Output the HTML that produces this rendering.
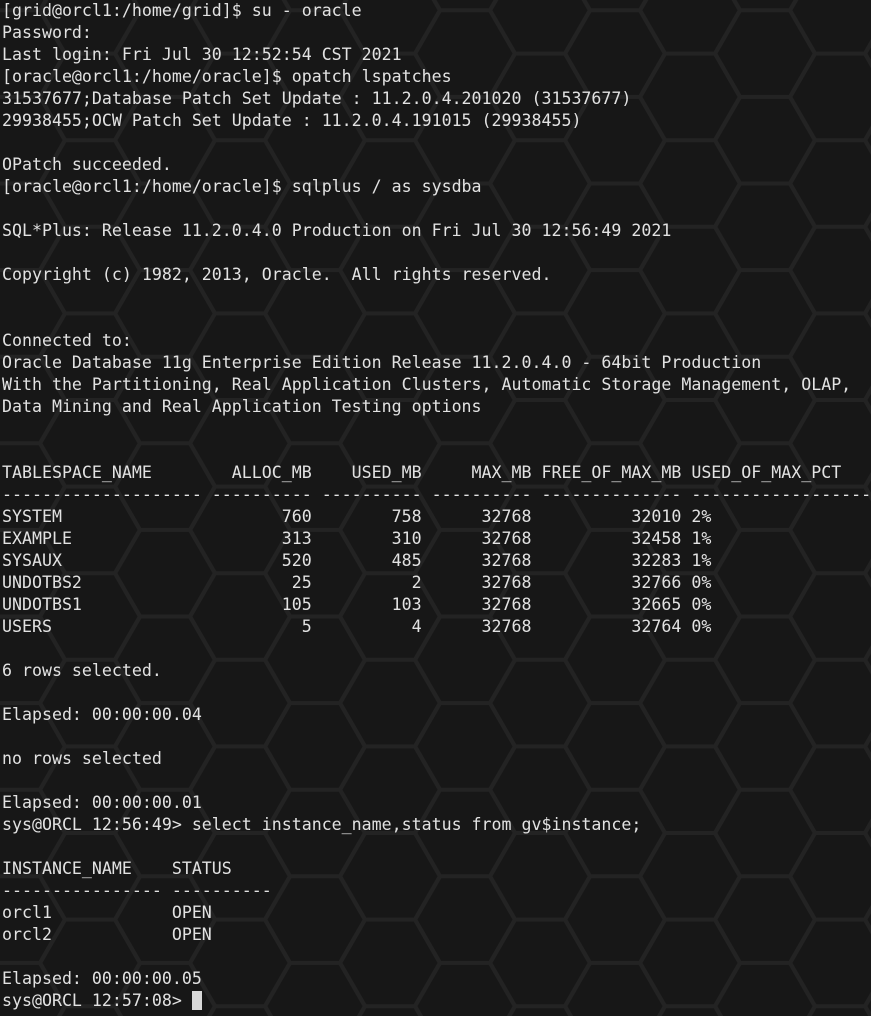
<!DOCTYPE html>
<html><head><meta charset="utf-8"><style>
html,body{margin:0;padding:0;width:871px;height:1016px;overflow:hidden;background:#171717}
svg{position:absolute;left:0;top:0}
pre{position:absolute;left:2px;top:0px;margin:0;font-family:"DejaVu Sans Mono","Liberation Mono",monospace;font-size:16.6px;line-height:22px;color:#e2e2e2;white-space:pre}
.cur{display:inline-block;width:10px;height:19px;background:#d8d8d8;vertical-align:-4px}
</style></head><body>
<svg width="871" height="1016">
<defs><pattern id="h" patternUnits="userSpaceOnUse" width="150" height="86.6" x="15" y="-33">
<g fill="none" stroke="#232323" stroke-width="4">
<path d="M25,-43.3 L50,0 L25,43.3 L-25,43.3 L-50,0 L-25,-43.3Z"/>
<path d="M175,-43.3 L200,0 L175,43.3 L125,43.3 L100,0 L125,-43.3Z"/>
<path d="M25,43.3 L50,86.6 L25,129.9 L-25,129.9 L-50,86.6 L-25,43.3Z"/>
<path d="M175,43.3 L200,86.6 L175,129.9 L125,129.9 L100,86.6 L125,43.3Z"/>
<path d="M100,0 L125,43.3 L100,86.6 L50,86.6 L25,43.3 L50,0Z"/>
</g></pattern></defs>
<rect width="871" height="1016" fill="#171717"/>
<rect width="871" height="1016" fill="url(#h)"/>
</svg>
<pre>[grid@orcl1:/home/grid]$ su - oracle
Password:
Last login: Fri Jul 30 12:52:54 CST 2021
[oracle@orcl1:/home/oracle]$ opatch lspatches
31537677;Database Patch Set Update : 11.2.0.4.201020 (31537677)
29938455;OCW Patch Set Update : 11.2.0.4.191015 (29938455)

OPatch succeeded.
[oracle@orcl1:/home/oracle]$ sqlplus / as sysdba

SQL*Plus: Release 11.2.0.4.0 Production on Fri Jul 30 12:56:49 2021

Copyright (c) 1982, 2013, Oracle.  All rights reserved.


Connected to:
Oracle Database 11g Enterprise Edition Release 11.2.0.4.0 - 64bit Production
With the Partitioning, Real Application Clusters, Automatic Storage Management, OLAP,
Data Mining and Real Application Testing options


TABLESPACE_NAME        ALLOC_MB    USED_MB     MAX_MB FREE_OF_MAX_MB USED_OF_MAX_PCT
-------------------- ---------- ---------- ---------- -------------- ------------------
SYSTEM                      760        758      32768          32010 2%
EXAMPLE                     313        310      32768          32458 1%
SYSAUX                      520        485      32768          32283 1%
UNDOTBS2                     25          2      32768          32766 0%
UNDOTBS1                    105        103      32768          32665 0%
USERS                         5          4      32768          32764 0%

6 rows selected.

Elapsed: 00:00:00.04

no rows selected

Elapsed: 00:00:00.01
sys@ORCL 12:56:49&gt; select instance_name,status from gv$instance;

INSTANCE_NAME    STATUS
---------------- ----------
orcl1            OPEN
orcl2            OPEN

Elapsed: 00:00:00.05
sys@ORCL 12:57:08&gt; <span class="cur"></span></pre>
</body></html>
